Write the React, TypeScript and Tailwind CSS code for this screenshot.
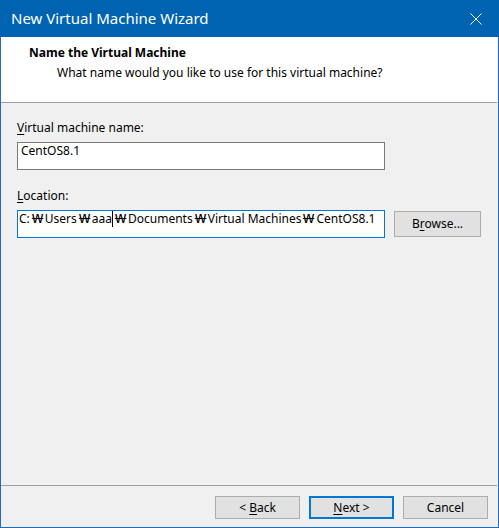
import React from "react";

function Mn({ children }: { children: React.ReactNode }) {
  return <span className="underline decoration-1 underline-offset-[2px]">{children}</span>;
}

// Korean locale renders the path separator as a wide won sign
function Won() {
  return <span className="inline-block w-[15px] text-center scale-x-[1.45]">₩</span>;
}

function Btn({ children, primary = false }: { children: React.ReactNode; primary?: boolean }) {
  return (
    <button
      className={
        primary
          ? "w-[85px] h-[23px] bg-[#e1e1e1] border-2 border-[#0078d7] leading-[16px] text-black"
          : "w-[85px] h-[23px] bg-[#e1e1e1] border border-[#adadad] leading-[16px] text-black"
      }
    >
      {children}
    </button>
  );
}

export default function App() {
  return (
    <div className="w-[499px] h-[528px] flex flex-col bg-[#f0f0f0] font-['Noto_Sans',sans-serif] text-[12px] text-black select-none">
      <div className="h-[37px] shrink-0 bg-[#0063b1] flex items-center justify-between pl-[11px] text-white">
        <span className="text-[15px]">New Virtual Machine Wizard</span>
        <div className="w-[46px] h-full flex items-center justify-center">
          <svg width="12" height="12" viewBox="0 0 12 12">
            <path d="M0.5 0.5 L11.5 11.5 M11.5 0.5 L0.5 11.5" stroke="#ffffff" strokeWidth="1" fill="none" />
          </svg>
        </div>
      </div>

      <div className="flex-1 flex flex-col border-x border-b border-[#1c6fc0]">
        <div className="h-[66px] shrink-0 bg-white border-b border-[#a0a0a0] mr-[1px] pt-[6px] pl-[28px] leading-[20px]">
          <div className="font-bold">Name the Virtual Machine</div>
          <div className="pl-[28px]">What name would you like to use for this virtual machine?</div>
        </div>

        <div className="flex-1 flex flex-col pl-[16px] pt-[17px] leading-[16px]">
          <div className="mb-[6px]">
            <Mn>V</Mn>irtual machine name:
          </div>
          <div className="w-[368px] h-[28px] bg-white border border-[#7a7a7a] pl-[3px]">CentOS8.1</div>

          <div className="mt-[18px] mb-[6px]">
            <Mn>L</Mn>ocation:
          </div>
          <div className="flex items-start">
            <div className="w-[368px] h-[28px] bg-white border border-[#0078d7] pl-[1px] whitespace-nowrap overflow-hidden">
              C:<Won />Users<Won />aaa
              <span className="inline-block w-px h-[16px] bg-black align-top" />
              <Won />Documents<Won />Virtual Machines<Won />CentOS8.1
            </div>
            <button className="ml-[9px] mt-px w-[87px] h-[26px] bg-[#e1e1e1] border border-[#adadad] leading-[16px]">
              B<Mn>r</Mn>owse...
            </button>
          </div>
        </div>

        <div className="shrink-0 border-t border-[#a0a0a0] mr-[1px] pt-[10px] pb-[8px] pr-[9px] flex justify-end gap-[9px]">
          <Btn>
            &lt; <Mn>B</Mn>ack
          </Btn>
          <Btn primary>
            <Mn>N</Mn>ext &gt;
          </Btn>
          <Btn>Cancel</Btn>
        </div>
      </div>
    </div>
  );
}
